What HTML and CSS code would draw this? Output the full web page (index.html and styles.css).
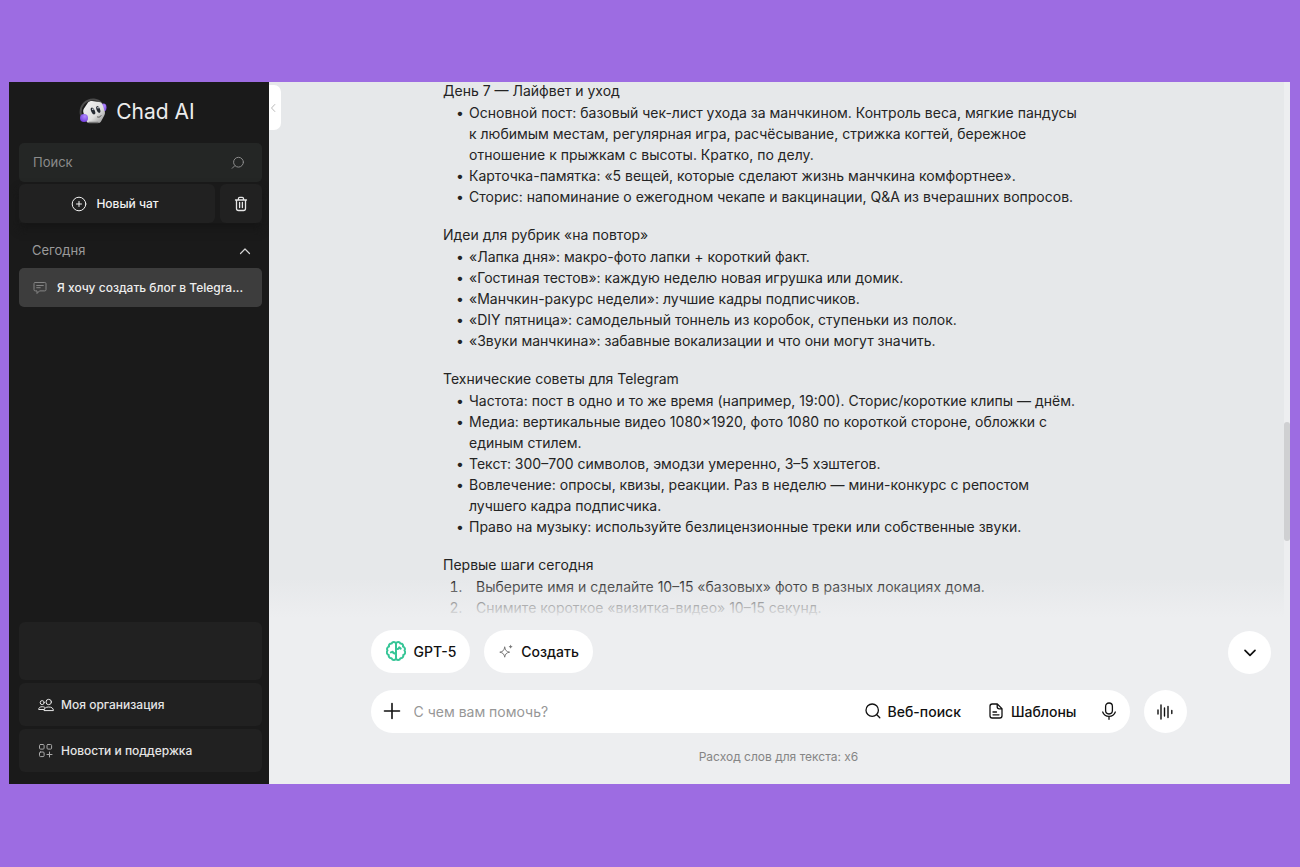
FILE: index.html
```html
<!DOCTYPE html>
<html lang="ru">
<head>
<meta charset="utf-8">
<meta name="viewport" content="width=device-width, initial-scale=1">
<title>Chad AI</title>
<link rel="stylesheet" href="styles.css">
</head>
<body>
<div class="app">
  <aside class="sidebar">
    <div class="brand">
      <svg class="brand-logo" width="28" height="27" viewBox="0 0 28 27" aria-hidden="true">
        <defs>
          <linearGradient id="face" x1="0" y1="0" x2="1" y2="1"><stop offset="0" stop-color="#f4f4f4"/><stop offset=".6" stop-color="#dedede"/><stop offset="1" stop-color="#8d8d8d"/></linearGradient>
          <radialGradient id="ear" cx=".6" cy=".3" r=".8"><stop offset="0" stop-color="#b18aff"/><stop offset="1" stop-color="#6a35d8"/></radialGradient>
        </defs>
        <path d="M2 17C0 8 7 1 15 1.500c3 .2 6 2 7.500 4" fill="none" stroke="#4b4b4b" stroke-width="2"/>
        <ellipse cx="24.500" cy="9.500" rx="3" ry="4" fill="url(#ear)"/>
        <path d="M9 4.500c1-1 2-1.500 4-1.500l7 1c2 .3 3 1 3.700 3l2 6c.5 2 .3 3-.7 5l-2.700 5c-.8 1.500-1.500 2-3.500 2h-8c-2 0-3-.7-3.600-2.500L4.500 15c-.5-2-.3-3 .5-4.500z" fill="url(#face)"/>
        <path d="M10 24.500h9" stroke="#777" stroke-width="1.500" stroke-linecap="round"/>
        <ellipse cx="14" cy="13" rx="1.800" ry="3.700" transform="rotate(-25 14 13)" fill="#252a33"/>
        <ellipse cx="19.300" cy="11.500" rx="1.700" ry="3.600" transform="rotate(-22 19.300 11.500)" fill="#252a33"/>
        <circle cx="13.800" cy="11.300" r=".8" fill="#dfe6ee"/><circle cx="19" cy="9.800" r=".8" fill="#dfe6ee"/>
        <path d="M18.500 19c1.500.5 2.700 0 3.500-1.300" fill="none" stroke="#444" stroke-width=".9"/>
        <circle cx="5" cy="20" r="4" fill="url(#ear)"/>
      </svg>
      <span>Chad AI</span>
    </div>
    <label class="search">
      <input type="search" placeholder="Поиск" aria-label="Поиск">
      <svg width="14" height="14" viewBox="0 0 14 14" aria-hidden="true"><circle cx="7.500" cy="6.200" r="4.900"/><path d="M3.800 9.700 1.200 12.300"/></svg>
    </label>
    <div class="new-row">
      <button class="tile new-chat" type="button">
        <svg width="16" height="16" viewBox="0 0 16 16" aria-hidden="true"><circle cx="8" cy="8" r="6.800"/><path d="M8 5.500v5M5.500 8h5"/></svg>
        Новый чат
      </button>
      <button class="tile trash" type="button" aria-label="Удалить">
        <svg width="14" height="16" viewBox="0 0 14 16" aria-hidden="true"><path d="M1.500 4h11M4.500 3.800V2.500c0-.8.400-1.200 1.200-1.200h2.600c.8 0 1.200.4 1.200 1.200v1.300M2.500 4v8.500c0 1.300.7 2 2 2h5c1.300 0 2-.7 2-2V4M5.600 6.500v5M8.400 6.500v5"/></svg>
      </button>
    </div>
    <button class="group" type="button" aria-expanded="true">
      <span>Сегодня</span>
      <svg width="12" height="8" viewBox="0 0 12 8" aria-hidden="true"><path d="m1.500 6.500 4.500-4.500 4.500 4.500"/></svg>
    </button>
    <a class="chat-link" href="#">
      <svg width="14" height="14" viewBox="0 0 14 14" aria-hidden="true"><path d="M2.200 1.500h9.600c.8 0 1.200.4 1.200 1.200v6c0 .8-.4 1.200-1.200 1.200H6.500L4 12.500V9.900H2.200C1.400 9.900 1 9.500 1 8.700v-6c0-.8.400-1.200 1.200-1.200zM3.700 4.500h6.600M3.700 6.700h3.500"/></svg>
      <span>Я хочу создать блог в Telegra...</span>
    </a>
    <nav class="bottom-nav">
      <div class="tile account"></div>
      <a class="tile nav-link" href="#">
        <svg width="16" height="14" viewBox="0 0 16 14" aria-hidden="true"><circle cx="10.700" cy="4" r="2.700"/><circle cx="4.200" cy="4.600" r="2"/><path d="M6 12.200c0-2 1.800-3.200 4.700-3.200s4.700 1.200 4.700 3.200zM5.800 11.500H.7C.7 9.700 2 8.700 4.300 8.700c1 0 1.700.2 2.300.5"/></svg>
        Моя организация
      </a>
      <a class="tile nav-link dim" href="#">
        <svg width="16" height="16" viewBox="0 0 16 16" aria-hidden="true"><rect x="1.500" y="1.500" width="4.600" height="4.600" rx="1"/><rect x="9" y="1.500" width="4.600" height="4.600" rx="1"/><rect x="1.500" y="9" width="4.600" height="4.600" rx="1"/><path d="M11.500 9v5M9 11.500h5"/></svg>
        Новости и поддержка
      </a>
    </nav>
  </aside>

  <main class="main">
    <button class="collapse" type="button" aria-label="Свернуть меню">
      <svg width="6" height="10" viewBox="0 0 6 10" aria-hidden="true"><path d="M4.800 1.500 1.500 5l3.300 3.500"/></svg>
    </button>
    <div class="thread">
      <article class="message">
        <section>
          <h2>День 7 — Лайфвет и уход</h2>
          <ul>
            <li>Основной пост: базовый чек-лист ухода за манчкином. Контроль веса, мягкие пандусы к любимым местам, регулярная игра, расчёсывание, стрижка когтей, бережное отношение к прыжкам с высоты. Кратко, по делу.</li>
            <li>Карточка-памятка: «5 вещей, которые сделают жизнь манчкина комфортнее».</li>
            <li>Сторис: напоминание о ежегодном чекапе и вакцинации, Q&amp;A из вчерашних вопросов.</li>
          </ul>
        </section>
        <section>
          <h2>Идеи для рубрик «на повтор»</h2>
          <ul>
            <li>«Лапка дня»: макро-фото лапки + короткий факт.</li>
            <li>«Гостиная тестов»: каждую неделю новая игрушка или домик.</li>
            <li>«Манчкин-ракурс недели»: лучшие кадры подписчиков.</li>
            <li>«DIY пятница»: самодельный тоннель из коробок, ступеньки из полок.</li>
            <li>«Звуки манчкина»: забавные вокализации и что они могут значить.</li>
          </ul>
        </section>
        <section>
          <h2>Технические советы для Telegram</h2>
          <ul>
            <li>Частота: пост в одно и то же время (например, 19:00). Сторис/короткие клипы — днём.</li>
            <li>Медиа: вертикальные видео 1080×1920, фото 1080 по короткой стороне, обложки с единым стилем.</li>
            <li>Текст: 300–700 символов, эмодзи умеренно, 3–5 хэштегов.</li>
            <li>Вовлечение: опросы, квизы, реакции. Раз в неделю — мини-конкурс с репостом лучшего кадра подписчика.</li>
            <li>Право на музыку: используйте безлицензионные треки или собственные звуки.</li>
          </ul>
        </section>
        <section>
          <h2>Первые шаги сегодня</h2>
          <ol>
            <li>Выберите имя и сделайте 10–15 «базовых» фото в разных локациях дома.</li>
            <li>Снимите короткое «визитка-видео» 10–15 секунд.</li>
          </ol>
        </section>
      </article>
    </div>
    <div class="scrollbar"><div class="thumb"></div></div>
    <div class="dock">
      <div class="composer">
        <div class="chips">
          <button class="pill" type="button">
            <svg class="brain" width="20" height="20" viewBox="0 0 20 20" aria-hidden="true"><path d="M10 2.300C9 .6 6.500.6 5.600 2.500 3.700 2.300 2.500 4 3 5.600 1.300 6 .5 8 1.500 9.500c-1.300 1.700-.6 3.900 1.200 4.500-.2 2 1 3.300 2.900 3.300C6.500 19.500 9 19.500 10 17.700c1 1.800 3.500 1.800 4.400-.4 1.900 0 3.100-1.300 2.900-3.300 1.800-.6 2.500-2.800 1.200-4.500 1-1.500.2-3.500-1.500-3.900.5-1.600-.7-3.300-2.600-3.100C13.500.6 11 .6 10 2.300zM10 2.300v15.400M10 8.200c1.800 0 2.800-.4 3.200-1.800M10 12.700c-2 0-3-.6-3.300-1.900M6.700 10.800l-1.800.6M13.200 6.400l1.500 1.200"/></svg>
            GPT-5
          </button>
          <button class="pill" type="button">
            <svg class="spark" width="14" height="14" viewBox="1 0 14 14" aria-hidden="true"><path d="M6.700 3.200c.6 3.300 1.700 4.400 4.900 5-3.200.6-4.300 1.700-4.900 5-.6-3.300-1.700-4.400-4.900-5 3.200-.6 4.300-1.700 4.900-5z"/><path class="fill" d="M12.600.6c.3 1.300.8 1.800 2.100 2.100-1.300.3-1.800.8-2.100 2.100-.3-1.300-.8-1.800-2.100-2.100 1.300-.3 1.800-.8 2.100-2.100z"/></svg>
            Создать
          </button>
        </div>
        <div class="entry">
          <div class="field">
            <button class="plain plus" type="button" aria-label="Прикрепить"><svg width="18" height="18" viewBox="0 0 18 18" aria-hidden="true"><path d="M9 1.500v15M1.500 9h15"/></svg></button>
            <input type="text" placeholder="С чем вам помочь?" aria-label="Сообщение">
            <button class="plain" type="button">
              <svg width="16" height="16" viewBox="0 0 16 16" aria-hidden="true"><circle cx="7.200" cy="7.200" r="6.200"/><path d="m11.800 11.800 3 3"/></svg>
              Веб-поиск
            </button>
            <button class="plain templates" type="button">
              <svg width="16" height="16" viewBox="0 0 16 16" aria-hidden="true"><path d="M9.300 1H4.200C2.800 1 2 1.800 2 3.200v9.600C2 14.200 2.800 15 4.200 15h7.600c1.400 0 2.200-.8 2.200-2.200V5.600zM9.200 1v2.800c0 1.300.7 2 2 2H14M5 9h3.500M5 11.800h6"/></svg>
              Шаблоны
            </button>
            <button class="plain" type="button" aria-label="Микрофон"><svg width="16" height="18" viewBox="0 0 16 18" aria-hidden="true"><rect x="4.600" y="1" width="6.800" height="11" rx="3.400"/><path d="M1.700 10c1 2.800 3.300 4.300 6.300 4.300s5.300-1.500 6.300-4.300M8 14.300v3"/></svg></button>
          </div>
          <button class="round" type="button" aria-label="Голосовой режим"><svg width="18" height="16" viewBox="0 0 18 16" aria-hidden="true"><path d="M2 6v4M5 1v14M8.500 4v8M12 2.500v11M15.800 6.500v3"/></svg></button>
        </div>
        <p class="cost">Расход слов для текста: x6</p>
      </div>
      <button class="round down" type="button" aria-label="Вниз"><svg width="14" height="10" viewBox="0 0 14 10" aria-hidden="true"><path d="m2 2.300 5 5 5-5"/></svg></button>
    </div>
  </main>
</div>
</body>
</html>
```

FILE: styles.css
```css
* { box-sizing: border-box; }

body {
  margin: 0;
  height: 100vh;
  padding: 82px 10px 83px 9px;
  background: #9d6ce2;
  font: 14px/21px Inter, "Liberation Sans", sans-serif;
  color: #242424;
}

button, input { font: inherit; color: inherit; border: 0; background: none; padding: 0; margin: 0; }
button { cursor: pointer; }
a { color: inherit; text-decoration: none; }
svg { flex: none; fill: none; stroke: currentColor; stroke-width: 1; stroke-linecap: round; stroke-linejoin: round; }

.app { display: flex; height: 100%; overflow: hidden; }

/* Sidebar */
.sidebar {
  flex: none;
  width: 260px;
  display: flex;
  flex-direction: column;
  padding: 0 7px 12px 10px;
  background: #1a1a1a;
  color: #e6e6e6;
  font-size: 13px;
}
.brand {
  height: 61px;
  padding: 0 7px 2px 0;
  display: flex;
  align-items: center;
  justify-content: center;
  gap: 9px;
  font-size: 21px;
  line-height: 28px;
  color: #ececec;
}
.brand-logo { stroke: none; }
.search {
  display: flex;
  align-items: center;
  height: 39px;
  padding: 0 17px 0 14px;
  border-radius: 5px;
  background: #242625;
  color: #8b8b8b;
}
.search input { flex: 1; min-width: 0; outline: 0; appearance: none; }
.search input::placeholder { color: #8b8b8b; opacity: 1; }
.tile { border-radius: 6px; background: #212121; }
.new-row { display: flex; gap: 5px; margin-top: 2px; box-shadow: 0 6px 8px #161616; }
.new-row .tile { height: 39px; display: flex; align-items: center; justify-content: center; }
.new-row .new-chat { flex: 1; gap: 9px; padding-right: 4px; font-size: 12px; font-weight: 500; color: #f2f2f2; }
.trash { width: 42px; }
.trash svg { stroke-width: 1.3; }
.group {
  display: flex;
  align-items: center;
  justify-content: space-between;
  margin-top: 17px;
  padding: 0 11px 0 13px;
  color: #9a9a9a;
}
.group svg { color: #d5d5d5; stroke-width: 1.2; }
.chat-link {
  display: flex;
  align-items: center;
  gap: 10px;
  height: 39px;
  margin-top: 7px;
  padding: 0 4px 0 14px;
  border-radius: 5px;
  background: #3d3d3d;
  color: #ededed;
  font-size: 12px;
  font-weight: 500;
}
.chat-link svg { color: #858585; }
.chat-link span { overflow: hidden; white-space: nowrap; text-overflow: ellipsis; }
.bottom-nav { display: grid; gap: 3px; margin-top: auto; }
.account { height: 58px; }
.nav-link { display: flex; align-items: center; gap: 7px; height: 43px; padding-left: 19px; font-size: 12px; font-weight: 500; }
.dim svg { color: #a9a9a9; }

/* Conversation */
.main {
  position: relative;
  flex: 1;
  min-width: 0;
  display: grid;
  grid-template: minmax(0, 1fr) auto / minmax(0, 1fr) 6px;
  background: #edeef0;
}
.collapse {
  position: absolute;
  left: 0;
  top: 3px;
  z-index: 1;
  width: 12px;
  height: 45px;
  border-radius: 0 7px 7px 0;
  background: #fff;
  color: #b9b9b9;
  display: flex;
  align-items: center;
  justify-content: center;
  padding-right: 4px;
}
.thread {
  position: relative;
  overflow: hidden;
  padding-left: 5px;
  background: #e6e8ea;
}
.thread::after {
  content: "";
  position: absolute;
  inset: auto 0 0;
  height: 40px;
  background: linear-gradient(rgb(237 238 240 / 0), #edeef0);
}
.message { width: 100%; max-width: 672px; margin: -2px auto 0; padding-right: 28px; }
.message section + section { margin-top: 17px; }
.message h2 { margin: 0 0 1px; font: inherit; }
.message ul, .message ol { margin: 0; padding-left: 26px; }
.message ul { list-style-type: "•\00a0\200a"; }
.message ol { padding-left: 23px; }
.message ol li { padding-left: 10px; }
.scrollbar { grid-column: 2; grid-row: 1 / 3; display: flex; flex-direction: column; }
.scrollbar::before { content: ""; flex: 340 1 0; }
.scrollbar::after { content: ""; flex: 243 1 0; }
.thumb { flex: 119 1 0; border-radius: 3px; background: #cfd0d2; }

/* Composer */
.dock {
  display: grid;
  grid-template-columns: minmax(0, 1fr) minmax(0, 816px) minmax(0, 1fr);
  padding: 12px 13px 17px 17px;
  color: #111;
}
.composer { grid-column: 2; }
.chips { display: flex; gap: 14px; }
.pill {
  display: flex;
  align-items: center;
  gap: 8px;
  height: 43px;
  padding: 0 14px 1px 15px;
  border-radius: 22px;
  background: #fff;
  font-weight: 500;
}
.brain { color: #35c596; stroke-width: 2; }
.spark { color: #777; overflow: visible; }
.spark .fill { fill: currentColor; stroke: none; }
.entry { display: flex; gap: 14px; margin-top: 17px; }
.field {
  flex: 1;
  min-width: 0;
  display: flex;
  align-items: center;
  height: 43px;
  padding: 0 13px 1px 12px;
  border-radius: 22px;
  background: #fff;
}
.field input { flex: 1; min-width: 0; outline: 0; margin-left: 13px; }
.field input::placeholder { color: #979797; opacity: 1; }
.plain { display: flex; align-items: center; gap: 7px; font-weight: 500; }
.plain svg { stroke-width: 1.3; }
.plus svg { stroke-width: 1.6; }
.templates { margin: 0 24px 0 27px; }
.round {
  flex: none;
  width: 43px;
  height: 43px;
  display: flex;
  align-items: center;
  justify-content: center;
  border-radius: 50%;
  background: #fff;
}
.round svg { stroke-width: 1.4; }
.down { justify-self: end; margin-top: 1px; }
.round.down svg { stroke-width: 1.7; }
.cost { margin: 13px 0 0; text-align: center; font-size: 12px; color: #858585; }
```
